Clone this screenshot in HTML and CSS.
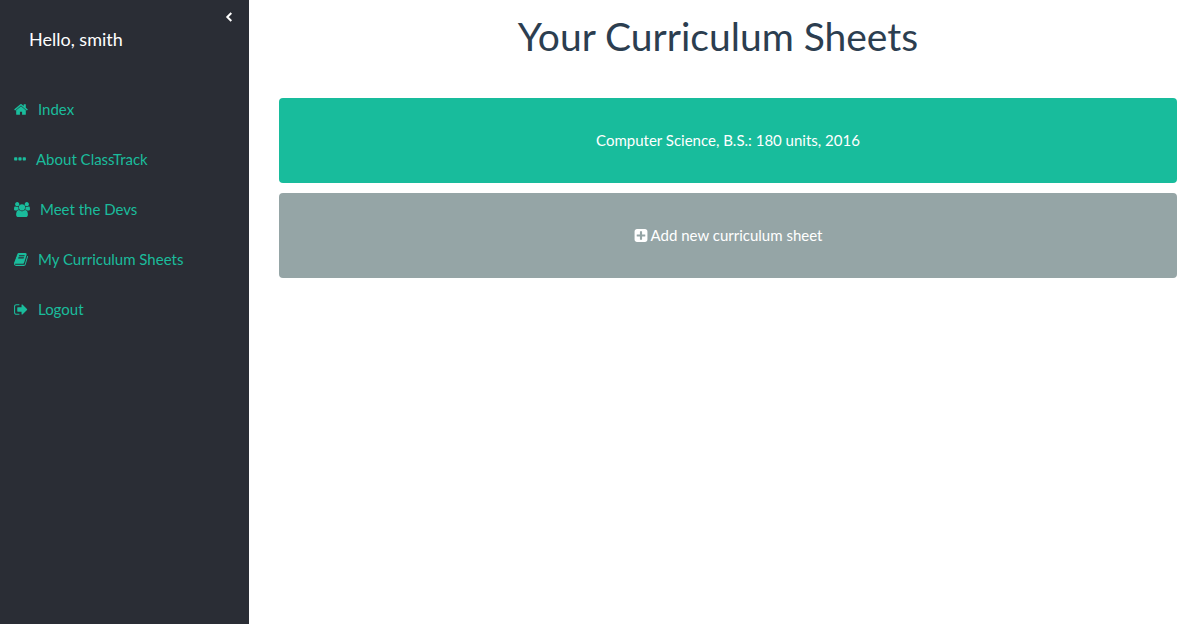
FILE: index.html
```html
<!DOCTYPE html>
<html lang="en">
<head>
<meta charset="utf-8">
<title>Your Curriculum Sheets</title>
<link rel="stylesheet" href="styles.css">
</head>
<body>
<div class="layout">
  <aside class="sidebar">
    <button class="collapse" type="button" aria-label="Collapse menu">
      <svg class="chevron" viewBox="0 0 8 10"><path d="M6.300 1 2.300 5 6.300 9"/></svg>
    </button>
    <p class="greeting">Hello, smith</p>
    <nav class="menu">
      <a class="menu-link" href="#"><svg class="icon" viewBox="64 0 1664 1792"><path d="M1472 992v480q0 26-19 45t-45 19h-384v-384h-256v384h-384q-26 0-45-19t-19-45v-480q0-1 .5-3t.5-3l575-474 575 474q1 2 1 6zm223-69l-62 74q-8 9-21 11h-3q-13 0-21-7l-692-577-692 577q-12 8-24 7-13-2-21-11l-62-74q-8-10-7-23.500t11-21.500l719-599q32-26 76-26t76 26l244 204v-195q0-14 9-23t23-9h192q14 0 23 9t9 23v408l219 182q10 8 11 21.500t-7 23.500z"/></svg>Index</a>
      <a class="menu-link" href="#"><svg class="icon icon-narrow" viewBox="192 0 1408 1792"><path d="M576 736v192q0 40-28 68t-68 28h-192q-40 0-68-28t-28-68v-192q0-40 28-68t68-28h192q40 0 68 28t28 68zm512 0v192q0 40-28 68t-68 28h-192q-40 0-68-28t-28-68v-192q0-40 28-68t68-28h192q40 0 68 28t28 68zm512 0v192q0 40-28 68t-68 28h-192q-40 0-68-28t-28-68v-192q0-40 28-68t68-28h192q40 0 68 28t28 68z"/></svg>About ClassTrack</a>
      <a class="menu-link" href="#"><svg class="icon icon-wide" viewBox="0 0 1920 1792"><path d="M593 896q-162 5-265 128h-134q-82 0-138-40.500t-56-118.500q0-353 124-353 6 0 43.500 21t97.500 42.500 119 21.500q67 0 133-23-5 37-5 66 0 139 81 256zm1071 637q0 120-73 189.500t-194 69.500h-874q-121 0-194-69.500t-73-189.500q0-53 3.500-103.500t14-109 26.500-108.500 43-97.500 62-81 85.500-53.500 111.500-20q10 0 43 21.500t73 48 107 48 135 21.500 135-21.500 107-48 73-48 43-21.500q61 0 111.500 20t85.500 53.500 62 81 43 97.500 26.500 108.500 14 109 3.500 103.500zm-1024-1277q0 106-75 181t-181 75-181-75-75-181 75-181 181-75 181 75 75 181zm704 384q0 159-112.500 271.500t-271.500 112.500-271.500-112.500-112.500-271.500 112.500-271.500 271.500-112.500 271.500 112.500 112.500 271.500zm576 225q0 78-56 118.500t-138 40.500h-134q-103-123-265-128 81-117 81-256 0-29-5-66 66 23 133 23 59 0 119-21.500t97.500-42.500 43.500-21q124 0 124 353zm-128-609q0 106-75 181t-181 75-181-75-75-181 75-181 181-75 181 75 75 181z"/></svg>Meet the Devs</a>
      <a class="menu-link" href="#"><svg class="icon" viewBox="64 0 1664 1792"><path d="M1703 478q40 57 18 129l-275 906q-19 64-76.500 107.500t-122.500 43.500h-923q-77 0-148.500-53.500t-99.500-131.500q-24-67-2-127 0-4 3-27t4-37q1-8-3-21.500t-3-19.500q2-11 8-21t16.500-23.500 16.500-23.500q23-38 45-91.500t30-91.500q3-10 .5-30t-.5-28q3-11 17-28t17-23q21-36 42-92t25-90q1-9-2.500-32t.5-28q4-13 22-30.500t22-22.500q19-26 42.500-84.500t27.500-96.500q1-8-3-25.500t-2-26.500q2-8 9-18t18-23 17-21q8-12 16.500-30.500t15-35 16-36 19.500-32 26.500-23.500 36-11.500 47.500 5.500l-1 3q38-9 51-9h761q74 0 114 56t18 130l-274 906q-36 119-71.500 153.500t-128.500 34.500h-869q-27 0-38 15-11 16-1 43 24 70 144 70h923q29 0 56-15.500t35-41.500l300-987q7-22 5-57 38 15 59 43zm-1064 2q-4 13 2 22.500t20 9.500h608q13 0 25.500-9.500t16.500-22.500l21-64q4-13-2-22.500t-20-9.500h-608q-13 0-25.500 9.500t-16.500 22.500zm-83 256q-4 13 2 22.500t20 9.500h608q13 0 25.500-9.500t16.500-22.500l21-64q4-13-2-22.500t-20-9.500h-608q-13 0-25.500 9.500t-16.500 22.500z"/></svg>My Curriculum Sheets</a>
      <a class="menu-link" href="#"><svg class="icon" viewBox="64 0 1664 1792"><path d="M704 1440q0 4 1 20t.5 26.500-3 23.500-10 19.500-20.500 6.500h-320q-119 0-203.500-84.500t-84.500-203.500v-704q0-119 84.500-203.500t203.500-84.500h320q13 0 22.500 9.500t9.500 22.500q0 4 1 20t.5 26.500-3 23.500-10 19.500-20.500 6.500h-320q-66 0-113 47t-47 113v704q0 66 47 113t113 47h312l11.500 1 11.500 3 8 5.500 7 9 2 13.500zm928-544q0 26-19 45l-544 544q-19 19-45 19t-45-19-19-45v-288h-448q-26 0-45-19t-19-45v-384q0-26 19-45t45-19h448v-288q0-26 19-45t45-19 45 19l544 544q19 19 19 45z"/></svg>Logout</a>
    </nav>
  </aside>
  <main class="content">
    <h1 class="title">Your Curriculum Sheets</h1>
    <div class="sheets">
      <a class="sheet" href="#">Computer Science, B.S.: 180 units, 2016</a>
      <a class="sheet sheet-add" href="#"><svg class="icon" viewBox="64 0 1664 1792"><path d="M1408 960v-128q0-26-19-45t-45-19h-320v-320q0-26-19-45t-45-19h-128q-26 0-45 19t-19 45v320h-320q-26 0-45 19t-19 45v128q0 26 19 45t45 19h320v320q0 26 19 45t45 19h128q26 0 45-19t19-45v-320h320q26 0 45-19t19-45zm256-544v960q0 119-84.500 203.500t-203.500 84.500h-960q-119 0-203.500-84.500t-84.500-203.500v-960q0-119 84.500-203.500t203.500-84.500h960q119 0 203.500 84.500t84.500 203.500z"/></svg>Add new curriculum sheet</a>
    </div>
  </main>
</div>
</body>
</html>
```
FILE: styles.css
```css
* {
  box-sizing: border-box;
}

body {
  margin: 0;
  background: #fff;
  color: #2c3e50;
  font-family: Lato, "Liberation Sans", sans-serif;
  font-size: 15px;
  line-height: 21px;
}

a {
  text-decoration: none;
}

.layout {
  display: flex;
  min-height: 100vh;
}

.sidebar {
  display: flex;
  flex-direction: column;
  flex: 0 0 249px;
  background: #2a2d35;
}

.collapse {
  display: flex;
  align-self: flex-end;
  margin: 0 12px 0 0;
  padding: 12px 4px 5px;
  border: 0;
  background: none;
  cursor: pointer;
}

.chevron {
  width: 8px;
  height: 10px;
  fill: none;
  stroke: #fff;
  stroke-width: 2;
}

.greeting {
  margin: 0;
  padding: 0 29px;
  color: #fff;
  font-size: 18px;
  line-height: 24px;
}

.menu {
  display: flex;
  flex-direction: column;
  padding-top: 33px;
}

.menu-link {
  display: flex;
  align-items: center;
  gap: 10px;
  height: 50px;
  padding: 0 14px;
  color: #1abc9c;
}

.icon {
  flex: none;
  width: 14px;
  height: 15px;
  fill: currentColor;
}

.icon-narrow {
  width: 12px;
}

.icon-wide {
  width: 16px;
}

.content {
  flex: 1;
  padding: 0 25px 0 30px;
}

.title {
  margin: 0;
  padding: 15px 20px 40px 0;
  font-size: 39px;
  font-weight: 400;
  line-height: 43px;
  text-align: center;
}

.sheets {
  display: flex;
  flex-direction: column;
  gap: 10px;
}

.sheet {
  display: flex;
  align-items: center;
  justify-content: center;
  gap: 3px;
  padding: 32px 16px;
  border-radius: 4px;
  background: #18bc9c;
  color: #fff;
}

.sheet-add {
  background: #95a5a6;
}
```
